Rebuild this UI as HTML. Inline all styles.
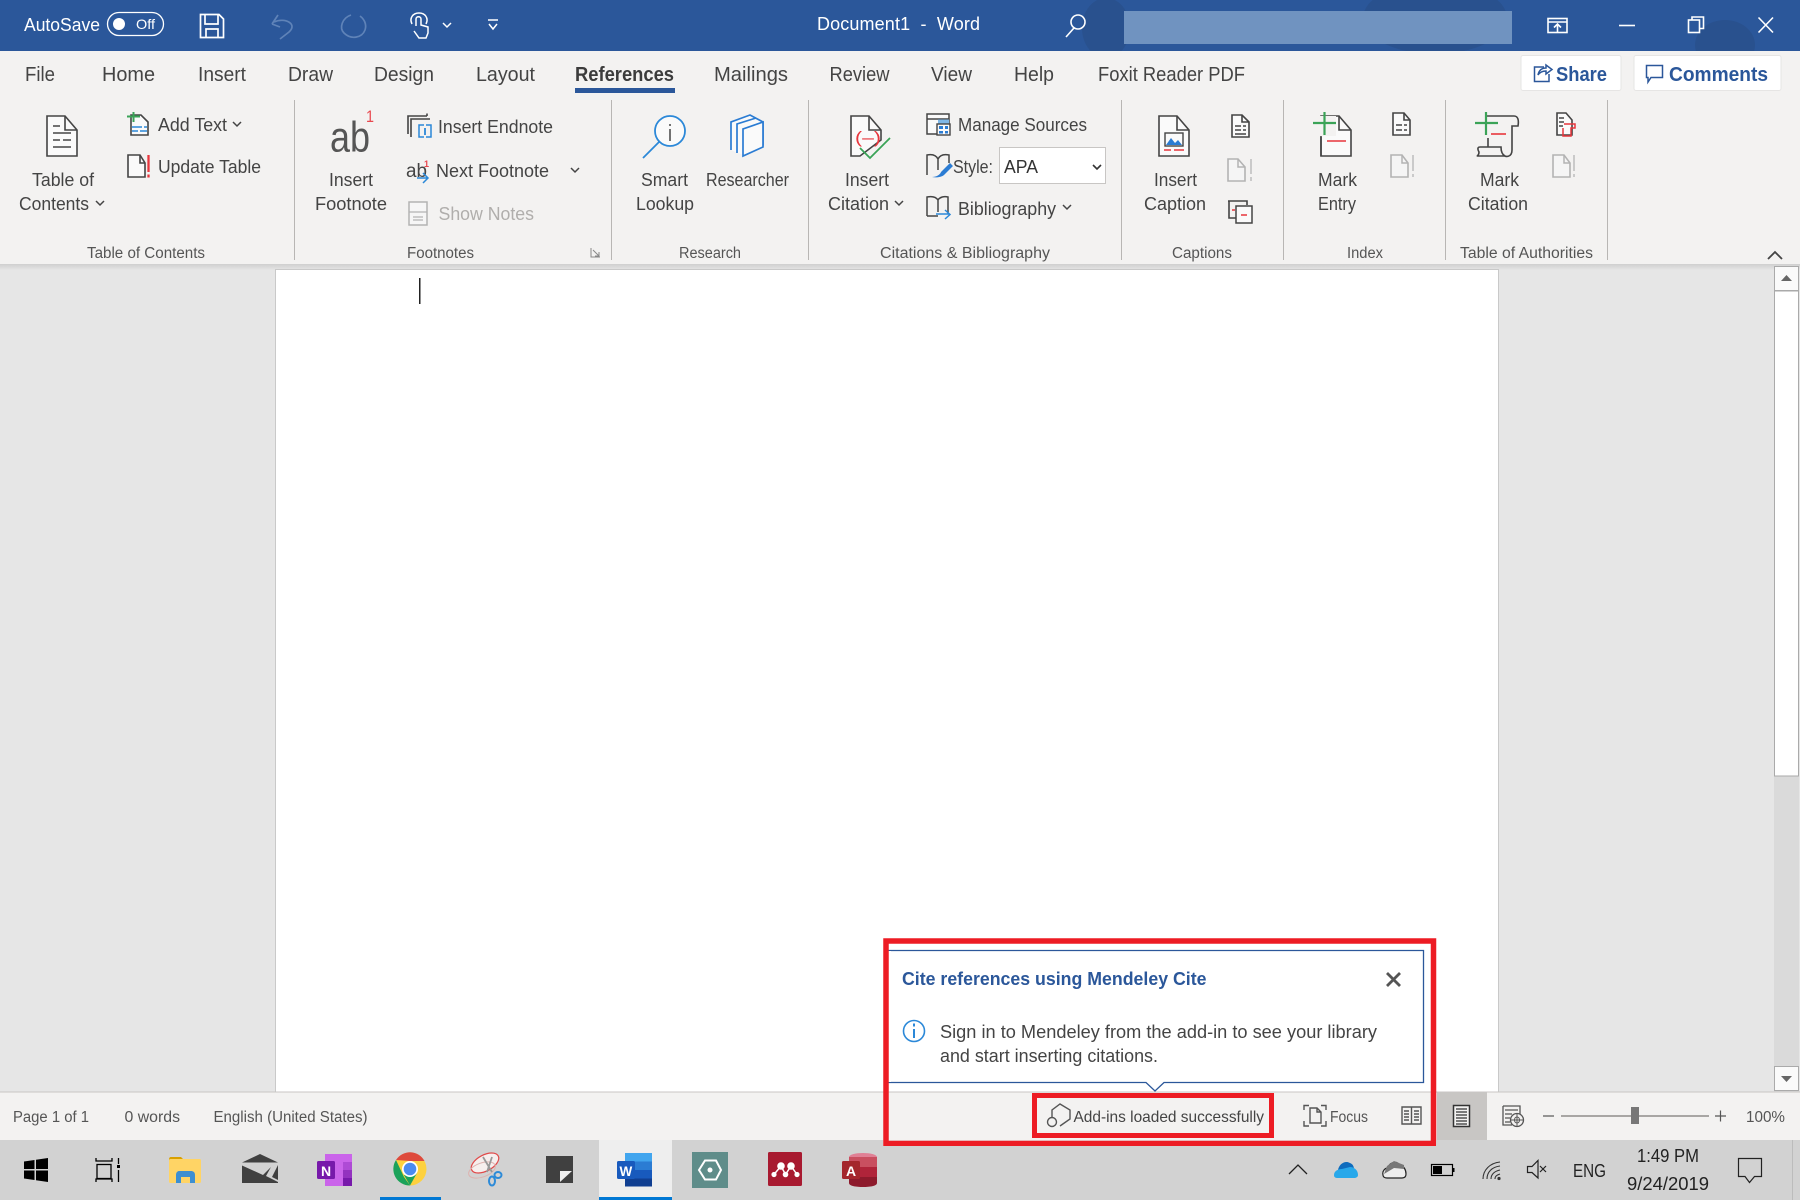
<!DOCTYPE html>
<html><head><meta charset="utf-8"><title>Document1 - Word</title>
<style>
html,body{margin:0;padding:0;width:1800px;height:1200px;overflow:hidden;background:#e6e6e6}
svg{display:block;position:absolute;left:0;top:0}
text{font-family:"Liberation Sans",sans-serif;font-size:17.5px;fill:#444}
.w{fill:#fff}.t{font-size:20px;fill:#444}.g{font-size:15.5px;fill:#555}.d{fill:#b0aeac;font-size:18px}.r{font-size:18px;fill:#444}
.s{font-size:15.5px;fill:#555}.b{font-weight:bold;fill:#2b579a}.k{fill:#222;font-size:18px}
.c{fill:none;stroke:#444;stroke-width:1.5}.l{fill:none;stroke:#444;stroke-width:1.6}
.p{fill:#fafafa;stroke:#444;stroke-width:1.6}.q{fill:#f5f5f5;stroke:#b3b3b3;stroke-width:1.6}
.sep{fill:#b8b6b4}
</style></head><body>
<svg width="1800" height="1200" viewBox="0 0 1800 1200" xmlns="http://www.w3.org/2000/svg">
<defs><linearGradient id="sh" x1="0" y1="0" x2="0" y2="1"><stop offset="0" stop-color="#cfcfcf"/><stop offset="1" stop-color="#e6e6e6"/></linearGradient></defs>

<!-- title bar -->
<rect width="1800" height="51" fill="#2b579a"/>
<g fill="#29518e"><ellipse cx="1106" cy="28" rx="24" ry="30"/><ellipse cx="1435" cy="18" rx="72" ry="36"/><ellipse cx="1725" cy="45" rx="30" ry="25"/></g>
<text class="w" x="24" y="31" textLength="76" lengthAdjust="spacingAndGlyphs" style="font-size:18px">AutoSave</text>
<rect x="107.500" y="12.500" width="56" height="23" rx="11.500" fill="none" stroke="#fff" stroke-width="1.300"/>
<circle cx="119" cy="24" r="6" fill="#fff"/>
<text class="w" x="136" y="29" textLength="19" lengthAdjust="spacingAndGlyphs" style="font-size:14px">Off</text>
<g fill="none" stroke="#fff" stroke-width="1.700"><path d="M200.500 14.500H219L223.500 19V37.500H200.500Z"/><path d="M205 14.500V24H218V14.500M206 37.500V29H218V37.500"/></g>
<g fill="none" stroke="#5f83b8" stroke-width="1.700"><path d="M272 24L278 15M272 24L280 27M274 22C285 17 298 24 289 32L280 39"/><path d="M351 15C342 18 339 28 344 33C351 40 362 38 365 30C367 24 364 19 360 16"/></g>
<g fill="none" stroke="#fff" stroke-width="1.500"><path d="M412 24C409 18 413 13 419 13C425 13 429 18 426 24"/><path d="M416 26V19C416 16 421 16 421 19V25L428 27V33L426 38H419L414 31"/><path d="M443 23L447 27L451 23M488 20H498M489 24L493 29L497 24"/></g>
<text class="w" x="817" y="30" textLength="163" lengthAdjust="spacing" style="font-size:18px">Document1 &#160;- &#160;Word</text>
<g fill="none" stroke="#fff" stroke-width="1.600"><circle cx="1078" cy="22" r="7"/><path d="M1074 28L1066 37"/></g>
<rect x="1124" y="11" width="388" height="33" fill="#7093c0"/>
<g fill="none" stroke="#fff" stroke-width="1.600"><rect x="1548" y="18.500" width="19" height="14"/><path d="M1548 22H1567M1557.500 32V25M1554 27.500L1557.500 24L1561 27.500"/><path d="M1619 25.500H1635"/><rect x="1688.500" y="20" width="11" height="12.500"/><path d="M1692 20V17H1703.500V28.500H1699.500"/><path d="M1758.500 17.500L1773 32.500M1773 17.500L1758.500 32.500"/></g>

<!-- ribbon -->
<rect y="51" width="1800" height="213" fill="#f3f2f1"/>
<text class="t" x="25" y="81" textLength="30" lengthAdjust="spacingAndGlyphs">File</text>
<text class="t" x="102" y="81" textLength="53" lengthAdjust="spacingAndGlyphs">Home</text>
<text class="t" x="198" y="81" textLength="48" lengthAdjust="spacingAndGlyphs">Insert</text>
<text class="t" x="288" y="81" textLength="45" lengthAdjust="spacingAndGlyphs">Draw</text>
<text class="t" x="374" y="81" textLength="60" lengthAdjust="spacingAndGlyphs">Design</text>
<text class="t" x="476" y="81" textLength="59" lengthAdjust="spacingAndGlyphs">Layout</text>
<text class="t" x="575" y="81" textLength="99" lengthAdjust="spacingAndGlyphs" style="font-weight:bold;fill:#3c3c3c">References</text>
<rect x="575" y="88" width="100" height="5" fill="#2b579a"/>
<text class="t" x="714" y="81" textLength="74" lengthAdjust="spacingAndGlyphs">Mailings</text>
<text class="t" x="829.500" y="81" textLength="60" lengthAdjust="spacingAndGlyphs">Review</text>
<text class="t" x="931" y="81" textLength="41" lengthAdjust="spacingAndGlyphs">View</text>
<text class="t" x="1014" y="81" textLength="40" lengthAdjust="spacingAndGlyphs">Help</text>
<text class="t" x="1098" y="81" textLength="147" lengthAdjust="spacingAndGlyphs">Foxit Reader PDF</text>
<rect x="1521" y="55.500" width="100" height="35" rx="2" fill="#fff" stroke="#e6e5e4"/>
<rect x="1634" y="55.500" width="147" height="35" rx="2" fill="#fff" stroke="#e6e5e4"/>
<text class="t b" x="1556" y="81" textLength="51" lengthAdjust="spacingAndGlyphs">Share</text>
<text class="t b" x="1669" y="81" textLength="99" lengthAdjust="spacingAndGlyphs">Comments</text>
<g fill="none" stroke="#2b579a" stroke-width="1.500"><path d="M1544 67H1534.500V81.500H1549V74"/><path d="M1538 75C1539 70 1542 68 1546 68V65L1552 69.500L1546 74V71C1543 71 1540 72 1538 75Z"/><path d="M1646.500 65.500H1662.500V77.500H1651L1648 82V77.500H1646.500Z"/></g>

<!-- separators -->
<g class="sep"><rect x="294" y="100" width="1" height="160"/><rect x="611" y="100" width="1" height="160"/><rect x="808" y="100" width="1" height="160"/><rect x="1121" y="100" width="1" height="160"/><rect x="1283" y="100" width="1" height="160"/><rect x="1445" y="100" width="1" height="160"/><rect x="1607" y="100" width="1" height="160"/></g>

<!-- Table of contents group -->
<path class="p" d="M47 116H65L77 130V156H47Z"/><path class="l" d="M65 116V130H77M53 126H60M53 133H71M53 140H60M63 140H71M53 147H71" stroke-width="1.300"/>
<path class="p" d="M131 115H141L148 122V135H131Z"/><path d="M127 116.500H140M133.500 112V122" stroke="#3aa357" stroke-width="2"/><path d="M132 127H142M144 127H147M132 131H138M140 131H147" stroke="#2b88d8" stroke-width="1.500"/>
<path class="p" d="M128 155H140L145 163V177H128Z"/><path class="l" d="M140 155V163H145"/><path d="M148.500 155V172M148.500 174.500V177.500" stroke="#e8363d" stroke-width="2.300"/>
<text class="r" x="32" y="186" textLength="62" lengthAdjust="spacingAndGlyphs">Table of</text>
<text class="r" x="19" y="210" textLength="70" lengthAdjust="spacingAndGlyphs">Contents</text>
<path class="c" d="M96 201L100 205L104 201M233 122L237 126L241 122"/>
<text class="r" x="158" y="131" textLength="69" lengthAdjust="spacingAndGlyphs">Add Text</text>
<text class="r" x="158" y="173" textLength="103" lengthAdjust="spacingAndGlyphs">Update Table</text>
<text class="g" x="87" y="258" textLength="118" lengthAdjust="spacingAndGlyphs">Table of Contents</text>

<!-- Footnotes group -->
<text x="330" y="151.500" textLength="40" lengthAdjust="spacingAndGlyphs" style="font-size:42.500px;fill:#555">ab</text>
<text x="366" y="122" textLength="8" lengthAdjust="spacingAndGlyphs" style="font-size:17px;fill:#e8484f">1</text>
<text class="r" x="329" y="186" textLength="44" lengthAdjust="spacingAndGlyphs">Insert</text>
<text class="r" x="315" y="210" textLength="72" lengthAdjust="spacingAndGlyphs">Footnote</text>
<path class="l" d="M427 116H408V134M427 113.500V116M430 119H411V137" stroke-width="1.400"/><path d="M424 125H419V137H424M426 125H431V137H426" fill="none" stroke="#2b88d8" stroke-width="1.500"/><path d="M425 128V135" stroke="#2b88d8" stroke-width="1.800"/>
<text class="r" x="438" y="133" textLength="115" lengthAdjust="spacingAndGlyphs">Insert Endnote</text>
<text x="406" y="177" textLength="21" lengthAdjust="spacingAndGlyphs" style="font-size:19px;fill:#444">ab</text>
<text x="424" y="167" style="font-size:9px;fill:#e8484f;font-weight:bold">1</text>
<path d="M417 178H427M423 173L428 178L423 183" fill="none" stroke="#2b88d8" stroke-width="1.500"/>
<text class="r" x="436" y="177" textLength="113" lengthAdjust="spacingAndGlyphs">Next Footnote</text>
<path class="c" d="M571 168L575 172L579 168"/>
<rect x="409" y="202" width="18" height="23" fill="#f6f6f6" stroke="#b3b3b3" stroke-width="1.500"/><path d="M409 212H427M413 217H423M413 220H423" stroke="#b3b3b3" stroke-width="1.200"/>
<text class="d" x="438.500" y="220" textLength="95.500" lengthAdjust="spacingAndGlyphs">Show Notes</text>
<text class="g" x="407" y="258" textLength="67" lengthAdjust="spacingAndGlyphs">Footnotes</text>
<path d="M600 257H591V248M593 250L599 256M599 252V256H595" fill="none" stroke="#888" stroke-width="1"/>

<!-- Research -->
<circle cx="670" cy="131" r="15" fill="#fafafa" stroke="#2b88d8" stroke-width="1.800"/><path d="M659 142L643 158" stroke="#2b88d8" stroke-width="1.800"/><path d="M670 129V141M670 124V126" stroke="#444" stroke-width="1.500"/>
<text class="r" x="641" y="186" textLength="47" lengthAdjust="spacingAndGlyphs">Smart</text>
<text class="r" x="636" y="210" textLength="58" lengthAdjust="spacingAndGlyphs">Lookup</text>
<g fill="#fafafa" stroke="#2b7cd3" stroke-width="1.700"><path d="M731 150V122L750 115L763 122L763 145L743 155"/><path d="M737 153V124L756 118"/><path d="M743 156V129L763 122V147Z"/></g>
<text class="r" x="706" y="186" textLength="83" lengthAdjust="spacingAndGlyphs">Researcher</text>
<text class="g" x="679" y="258" textLength="62" lengthAdjust="spacingAndGlyphs">Research</text>

<!-- Citations -->
<path class="p" d="M851 116H869L881 130V140L860 156H851Z"/><path class="l" d="M869 116V130H881"/>
<text x="855" y="143" textLength="26" lengthAdjust="spacingAndGlyphs" style="font-size:17px;fill:#e8363d">(–)</text>
<path d="M860 148L870 158L890 138" fill="none" stroke="#3aa357" stroke-width="1.800"/>
<text class="r" x="845" y="186" textLength="44" lengthAdjust="spacingAndGlyphs">Insert</text>
<text class="r" x="828" y="210" textLength="61" lengthAdjust="spacingAndGlyphs">Citation</text>
<path class="c" d="M895 201L899 205L903 201"/>
<rect x="927" y="114" width="22" height="20" fill="#fafafa" stroke="#444" stroke-width="1.500"/><path d="M927 119H949" stroke="#444" stroke-width="1.500"/><rect x="938" y="119.500" width="11" height="4" fill="#7fb7e6"/><rect x="937" y="124" width="13" height="11" fill="#fafafa" stroke="#444" stroke-width="1.400"/><path d="M939 126H943V129H939ZM945 126H948V129H945ZM939 131H943V133.500H939ZM945 131H948V133.500H945Z" fill="#2b7cd3"/>
<text class="r" x="958" y="131" textLength="129" lengthAdjust="spacingAndGlyphs">Manage Sources</text>
<path d="M927 175V155C932 154 936 155 938 159C940 155 944 154 949 155V163M938 159V170" fill="none" stroke="#444" stroke-width="1.500"/><path d="M932 177C936 177 940 175 941 172L950 163L953 166L944 175C942 177 936 178 932 177Z" fill="#2b7cd3"/>
<text class="r" x="953" y="173" textLength="40" lengthAdjust="spacingAndGlyphs">Style:</text>
<rect x="999.500" y="147.500" width="106" height="36" fill="#fff" stroke="#c8c6c4"/>
<text class="r" x="1004" y="173" textLength="34" lengthAdjust="spacingAndGlyphs" style="fill:#333">APA</text>
<path d="M1093 165L1097 169L1101 165" fill="none" stroke="#333" stroke-width="1.600"/>
<path d="M927 216V197C932 196 936 197 938 200C940 197 944 196 948 197V214M938 200V212M927 216H938" fill="none" stroke="#444" stroke-width="1.500"/><path d="M936 214H949M945 210L950 214.500L945 219" fill="none" stroke="#2b88d8" stroke-width="1.500"/>
<text class="r" x="958" y="215" textLength="98" lengthAdjust="spacingAndGlyphs">Bibliography</text>
<path class="c" d="M1063 205L1067 209L1071 205"/>
<text class="g" x="880" y="258" textLength="170" lengthAdjust="spacingAndGlyphs">Citations &amp; Bibliography</text>

<!-- Captions -->
<path class="p" d="M1159 116H1177L1189 130V156H1159Z"/><path class="l" d="M1177 116V130H1189"/>
<rect x="1165" y="133" width="18" height="13" fill="#fafafa" stroke="#444" stroke-width="1.400"/><path d="M1166 145L1171 138L1175 143L1178 140L1182 145Z" fill="#2b7cd3"/><path d="M1164 150H1171M1174 150H1184" stroke="#e8363d" stroke-width="1.400"/>
<text class="r" x="1154" y="186" textLength="43" lengthAdjust="spacingAndGlyphs">Insert</text>
<text class="r" x="1144" y="210" textLength="62" lengthAdjust="spacingAndGlyphs">Caption</text>
<text class="g" x="1172" y="258" textLength="60" lengthAdjust="spacingAndGlyphs">Captions</text>
<path class="p" d="M1232 115H1242L1249 122V137H1232Z"/><path class="l" d="M1242 115V122H1249M1235 126H1241M1243 126H1246M1235 130H1241M1243 130H1246M1235 134H1246" stroke-width="1.100"/>
<path class="q" d="M1228 159H1238L1245 167V181H1228Z"/><path d="M1238 159V167H1245" fill="none" stroke="#b3b3b3" stroke-width="1.500"/><path d="M1251 159V174M1251 177V181" stroke="#c6c6c6" stroke-width="1.800"/>
<path class="l" d="M1229 204V201H1228V201H1247V205M1229 201V218H1236"/><rect x="1236" y="206" width="16" height="17" fill="#fafafa" stroke="#444" stroke-width="1.500"/><path d="M1241 215H1247M1232 210H1235" stroke="#e8363d" stroke-width="1.500"/>

<!-- Index -->
<path class="p" d="M1321 116H1339L1351 130V156H1321Z"/><path class="l" d="M1339 116V130H1351"/><rect x="1314" y="116" width="22" height="20" fill="#f3f2f1"/><path class="l" d="M1321 137V156"/><path d="M1313 123H1336M1324.500 112V135" stroke="#3aa357" stroke-width="2.200"/><path d="M1327 141H1346" stroke="#e8363d" stroke-width="1.600"/>
<text class="r" x="1318" y="186" textLength="39" lengthAdjust="spacingAndGlyphs">Mark</text>
<text class="r" x="1318" y="210" textLength="38" lengthAdjust="spacingAndGlyphs">Entry</text>
<text class="g" x="1347" y="258" textLength="36" lengthAdjust="spacingAndGlyphs">Index</text>
<path class="p" d="M1393 113H1404L1410 120V135H1393Z"/><path class="l" d="M1404 113V120H1410M1396 125H1402M1404 125H1407M1396 130H1402M1404 130H1407" stroke-width="1.200"/>
<path class="q" d="M1391 155H1402L1408 163V177H1391Z"/><path d="M1402 155V163H1408" fill="none" stroke="#b3b3b3" stroke-width="1.500"/><path d="M1413 155V171M1413 174V177" stroke="#c6c6c6" stroke-width="1.800"/>
<text class="r" x="1480" y="186" textLength="39" lengthAdjust="spacingAndGlyphs">Mark</text>
<text class="r" x="1468" y="210" textLength="60" lengthAdjust="spacingAndGlyphs">Citation</text>
<text class="g" x="1460" y="258" textLength="133" lengthAdjust="spacingAndGlyphs">Table of Authorities</text>

<!-- Mark citation icon -->
<path class="l" d="M1486 116H1514C1518 116 1519 120 1518 126H1512V150C1512 158 1505 157 1503 155M1488 138V147M1488 147H1480C1476 147 1479 152 1479 152C1479 156 1476 156 1478 156H1505C1503 155 1501 153 1501 147H1488"/><path d="M1475 123H1498M1486 112V135" stroke="#3aa357" stroke-width="2.200"/><path d="M1491 134H1506" stroke="#e8363d" stroke-width="1.600"/>
<path class="p" d="M1557 113H1566L1572 120V135H1557Z" stroke-width="1.300"/><path class="l" d="M1559 118H1564M1559 122H1564M1559 126H1563" stroke-width="1.100"/><path d="M1564 124H1575V128H1571V136H1563V128" fill="none" stroke="#e8363d" stroke-width="1.500"/>
<path class="q" d="M1553 155H1564L1570 163V177H1553Z"/><path d="M1564 155V163H1570" fill="none" stroke="#b3b3b3" stroke-width="1.500"/><path d="M1574 155V171M1574 174V177" stroke="#c6c6c6" stroke-width="1.800"/>
<path d="M1768 259L1775 252L1782 259" fill="none" stroke="#444" stroke-width="1.800"/>

<!-- document area -->
<rect y="264" width="1800" height="828" fill="#e6e6e6"/>
<rect y="264" width="1800" height="6" fill="url(#sh)"/>
<rect x="275" y="269" width="1224" height="823" fill="#c9c9c9"/>
<rect x="276" y="270" width="1222" height="822" fill="#fff"/>
<rect x="419" y="278" width="1.500" height="26" fill="#222"/>
<!-- scrollbar -->
<rect x="1774" y="266" width="25" height="826" fill="#dadada"/>
<rect x="1774.500" y="266.500" width="24" height="24" fill="#fafafa" stroke="#aaa"/>
<path d="M1781 281L1786.500 275L1792 281Z" fill="#666"/>
<rect x="1774.500" y="291" width="24" height="485" fill="#fff" stroke="#aaa"/>
<rect x="1774.500" y="1066.500" width="24" height="24" fill="#fafafa" stroke="#aaa"/>
<path d="M1781 1076L1786.500 1082L1792 1076Z" fill="#666"/>

<!-- status bar -->
<rect y="1092" width="1800" height="48" fill="#f3f2f1"/>
<rect y="1091.500" width="1800" height="1" fill="#c8c6c4"/>
<text class="s" x="13" y="1122" textLength="76" lengthAdjust="spacingAndGlyphs">Page 1 of 1</text>
<text class="s" x="124.500" y="1122" textLength="55.500" lengthAdjust="spacingAndGlyphs">0 words</text>
<text class="s" x="213.500" y="1122" textLength="154" lengthAdjust="spacingAndGlyphs">English (United States)</text>
<text class="s" x="1073.500" y="1122" textLength="190.500" lengthAdjust="spacingAndGlyphs" style="font-size:16px;fill:#444">Add-ins loaded successfully</text>
<path d="M1052 1118V1110L1060 1104L1070 1110V1119L1060 1126" fill="none" stroke="#555" stroke-width="1.400"/><circle cx="1052" cy="1122" r="4.500" fill="#f3f2f1" stroke="#555" stroke-width="1.400"/>
<g fill="none" stroke="#555" stroke-width="1.400"><path d="M1304 1110V1105.500H1309M1321 1105.500H1326V1110M1326 1121V1126H1321M1309 1126H1304V1121"/><path d="M1310 1108H1317L1321 1112V1123H1310ZM1317 1108V1112H1321"/></g>
<text class="s" x="1330" y="1122" textLength="38" lengthAdjust="spacingAndGlyphs" style="font-size:16px">Focus</text>
<g fill="none" stroke="#555" stroke-width="1.400"><path d="M1402 1107H1411.500V1124H1402ZM1411.500 1107H1421V1124H1411.500ZM1404 1111H1409M1404 1114H1409M1404 1117H1409M1404 1120H1409M1414 1111H1419M1414 1114H1419M1414 1117H1419M1414 1120H1419"/></g>
<rect x="1437" y="1092" width="50" height="48" fill="#c8c6c4"/>
<rect x="1453.500" y="1105.500" width="16" height="21" fill="#f3f2f1" stroke="#333" stroke-width="1.500"/><path d="M1456 1109H1467M1456 1112H1467M1456 1115H1467M1456 1118H1467M1456 1121H1467M1456 1124H1467" stroke="#333" stroke-width="1.200"/>
<path d="M1503 1106H1520V1115M1503 1106V1125H1512M1505 1110H1518M1505 1114H1512M1505 1118H1510M1505 1122H1510" fill="none" stroke="#555" stroke-width="1.300"/><circle cx="1517" cy="1120" r="6.500" fill="#f3f2f1" stroke="#555" stroke-width="1.300"/><path d="M1511 1120H1523M1517 1114V1126M1514.500 1120C1514.500 1116 1519.500 1116 1519.500 1120C1519.500 1124 1514.500 1124 1514.500 1120" fill="none" stroke="#555" stroke-width="1"/>
<path d="M1543 1116H1554" stroke="#555" stroke-width="1.200"/>
<rect x="1561" y="1115" width="148" height="2" fill="#a8a6a4"/>
<rect x="1631" y="1107" width="8" height="17" fill="#777"/>
<path d="M1715 1116H1726M1720.500 1110.500V1121.500" stroke="#555" stroke-width="1.200"/>
<text class="s" x="1746" y="1122" textLength="39" lengthAdjust="spacingAndGlyphs">100%</text>

<!-- callout -->
<path d="M888 950.500H1423.500V1082.500H1164L1155 1091L1146 1082.500H888" fill="#fff" stroke="#2b579a" stroke-width="1.300"/>
<rect x="888" y="951" width="3" height="131" fill="#fff"/>
<text class="b" x="902" y="985" textLength="304.500" lengthAdjust="spacingAndGlyphs" style="font-size:18px">Cite references using Mendeley Cite</text>
<path d="M1387 973L1400 986M1400 973L1387 986" stroke="#555" stroke-width="2.800"/>
<circle cx="914" cy="1031" r="10.500" fill="#fff" stroke="#2b88d8" stroke-width="1.600"/><path d="M914 1029V1038M914 1023.500V1026.500" stroke="#2b88d8" stroke-width="2"/>
<text class="r" x="940" y="1038" textLength="437" lengthAdjust="spacingAndGlyphs">Sign in to Mendeley from the add-in to see your library</text>
<text class="r" x="940" y="1062" textLength="218" lengthAdjust="spacingAndGlyphs">and start inserting citations.</text>

<!-- red boxes -->
<rect x="886" y="941" width="547.500" height="202.500" fill="none" stroke="#ed1c24" stroke-width="5.500"/>
<rect x="1034.500" y="1095.500" width="237" height="40" fill="none" stroke="#ed1c24" stroke-width="5"/>

<!-- taskbar -->
<rect y="1146" width="1800" height="54" fill="#d2d2d2"/>
<rect y="1140" width="883" height="6" fill="#d2d2d2"/>
<rect x="1436" y="1140" width="364" height="6" fill="#d2d2d2"/>
<rect x="1792" y="1140" width="1" height="60" fill="#bcbcbc"/>
<!-- windows -->
<path d="M24 1161.500L34.500 1160V1169H24ZM36 1159.800L48 1158V1169H36ZM24 1170.500H34.500V1180L24 1178.500ZM36 1170.500H48V1182L36 1180.200Z" fill="#000"/>
<!-- task view -->
<g fill="none" stroke="#000" stroke-width="1.300"><rect x="97" y="1164.500" width="14" height="14"/><path d="M96 1158V1161H112V1158M96 1182V1179H112V1182M118.500 1158V1164M118.500 1170V1182"/></g><rect x="117" y="1165" width="3" height="3" fill="#000"/>
<!-- folder -->
<path d="M169 1160C169 1157 170 1157 172 1157H181L184 1160V1162H169Z" fill="#d9a000"/><rect x="169" y="1159" width="32" height="24" rx="1.500" fill="#ffd465"/><path d="M176 1183V1175C176 1172 178 1171 179 1171H191C193 1171 195 1172 195 1175V1183H190V1177H181V1183Z" fill="#3d8fd1"/>
<!-- mail -->
<path d="M242 1162.500L260 1154L278 1162.500ZM242 1165.500L263 1175L271 1167L266 1176L278 1182V1183H242ZM278 1165V1180L272 1177Z" fill="#404040"/>
<!-- onenote -->
<rect x="325" y="1154" width="27" height="32" fill="#ca64ea"/><rect x="343" y="1162" width="9" height="8" fill="#ae4bd5"/><rect x="343" y="1170" width="9" height="8" fill="#9332bf"/><rect x="343" y="1178" width="9" height="8" fill="#7719aa"/><rect x="317" y="1161" width="18" height="18" rx="1.500" fill="#7719aa"/>
<text x="321" y="1176" style="font-size:14px;font-weight:bold;fill:#fff">N</text>
<!-- chrome -->
<circle cx="410" cy="1169" r="16.500" fill="#fdd13f"/>
<path d="M396 1160A16.500 16.500 0 0 1 424.500 1161L410 1161Z" fill="#de4a3c"/><path d="M396 1160L404 1177L410 1185.500A16.500 16.500 0 0 1 396 1160Z" fill="#1ba25a"/><path d="M410 1185.500L417 1173L404 1175Z" fill="#1ba25a"/>
<circle cx="410" cy="1169" r="8" fill="#fff"/><circle cx="410" cy="1169" r="6.300" fill="#4a8bf1"/>
<rect x="380" y="1197" width="61" height="3" fill="#0078d4"/>
<!-- snip -->
<ellipse cx="485" cy="1163" rx="15" ry="8" transform="rotate(-28 485 1163)" fill="#f6efee" stroke="#e04b4b" stroke-width="1.200"/><ellipse cx="482" cy="1170" rx="14" ry="7" transform="rotate(-20 482 1170)" fill="none" stroke="#ddb3b0" stroke-width="1"/><path d="M483 1157L492 1172M492 1157L487 1172" stroke="#999" stroke-width="1.800"/><ellipse cx="492" cy="1181" rx="3" ry="4.500" fill="none" stroke="#2e8bd8" stroke-width="2"/><ellipse cx="498" cy="1175" rx="3.500" ry="3" fill="none" stroke="#2e8bd8" stroke-width="2"/>
<!-- sticky -->
<rect x="546" y="1156" width="27" height="27" fill="#404040"/><path d="M560 1182V1171H572Z" fill="#efefef"/>
<!-- word -->
<rect x="599" y="1140" width="73" height="60" fill="#eeeeee"/><rect x="599" y="1197" width="73" height="3" fill="#0078d4"/>
<rect x="625" y="1153" width="27" height="8.500" fill="#41a5ee"/><rect x="625" y="1161.500" width="27" height="8.500" fill="#2b7cd3"/><rect x="625" y="1170" width="27" height="8.500" fill="#185abd"/><rect x="625" y="1178.500" width="27" height="8" fill="#103f91"/><rect x="617" y="1161" width="18" height="18" rx="1.500" fill="#185abd"/>
<text x="619.500" y="1176" style="font-size:13.500px;font-weight:bold;fill:#fff">W</text>
<!-- mendeley cite -->
<rect x="692" y="1152" width="36" height="36" fill="#5f8d8a"/><path d="M699 1170L705 1160.500H716L721 1170L716 1179.500H705Z" fill="none" stroke="#fff" stroke-width="2"/><circle cx="710" cy="1170" r="2.500" fill="#fff"/>
<!-- mendeley -->
<rect x="768" y="1152" width="34" height="34" rx="1.500" fill="#a81a30"/><g fill="#fff"><circle cx="781" cy="1166" r="3.800"/><circle cx="791" cy="1166" r="3.800"/><circle cx="774" cy="1174.500" r="2.600"/><circle cx="785.500" cy="1174.500" r="2.800"/><circle cx="797" cy="1174.500" r="2.600"/></g><path d="M774 1174.500L781 1166L785.500 1174.500L791 1166L797 1174.500" fill="none" stroke="#fff" stroke-width="1.500"/>
<!-- access -->
<ellipse cx="863" cy="1157" rx="14" ry="4" fill="#e08095"/><path d="M849 1157H877V1167H849Z" fill="#c94f60"/><path d="M849 1167H877V1177H849Z" fill="#b0243a"/><path d="M849 1177H877V1183C877 1186 870 1187 863 1187C856 1187 849 1186 849 1183Z" fill="#8d1a2c"/><rect x="842" y="1161" width="18" height="18" rx="1.500" fill="#a4262c"/>
<text x="846" y="1176" style="font-size:14px;font-weight:bold;fill:#fff">A</text>
<!-- tray -->
<path d="M1289 1174L1298 1165L1307 1174" fill="none" stroke="#222" stroke-width="1.300"/>
<path d="M1338 1170C1339 1164 1345 1160 1350 1163C1353 1164 1354 1167 1354 1169L1338 1170Z" fill="#0f6cbd"/><path d="M1334 1175C1334 1171 1338 1169 1342 1169L1350 1167C1354 1167 1358 1170 1358 1175C1358 1177 1356 1178 1354 1178H1338C1335 1178 1334 1177 1334 1175Z" fill="#28a8ea"/>
<path d="M1383 1175C1382 1171 1385 1168 1388 1168C1389 1163 1396 1160 1400 1165C1404 1166 1406 1170 1406 1174C1406 1177 1404 1178 1402 1178H1387C1385 1178 1383 1177 1383 1175Z" fill="#ededed" stroke="#222" stroke-width="1.200"/><path d="M1384 1174L1394 1168L1404 1169V1165L1394 1161L1387 1166Z" fill="#777"/>
<rect x="1431.500" y="1164.500" width="21" height="11" fill="none" stroke="#000" stroke-width="1.200"/><rect x="1433" y="1166" width="9" height="8" fill="#000"/><rect x="1453" y="1168" width="1.500" height="4" fill="#000"/>
<g fill="none" stroke="#333" stroke-width="1.100"><path d="M1483 1179C1483 1170 1490 1163 1500 1162M1487 1179C1487 1172 1492 1167 1500 1166M1491 1179C1491 1174 1495 1171 1500 1170M1495 1179C1495 1176 1497 1175 1500 1174"/></g><circle cx="1499" cy="1178.500" r="1.600" fill="#333"/>
<path d="M1527.500 1166.500H1532L1538 1160.500V1178L1532 1172.500H1527.500ZM1540 1166L1546 1172M1546 1166L1540 1172" fill="none" stroke="#222" stroke-width="1.200"/>
<text class="k" x="1573" y="1177" textLength="33" lengthAdjust="spacingAndGlyphs">ENG</text>
<text class="k" x="1637" y="1162" textLength="62" lengthAdjust="spacingAndGlyphs">1:49 PM</text>
<text class="k" x="1627" y="1190" textLength="82" lengthAdjust="spacingAndGlyphs">9/24/2019</text>
<path d="M1738.500 1158.500H1761.500V1176.500H1754.500L1749.500 1182.500L1745 1176.500H1738.500Z" fill="none" stroke="#222" stroke-width="1.200"/>
</svg>
</body></html>
